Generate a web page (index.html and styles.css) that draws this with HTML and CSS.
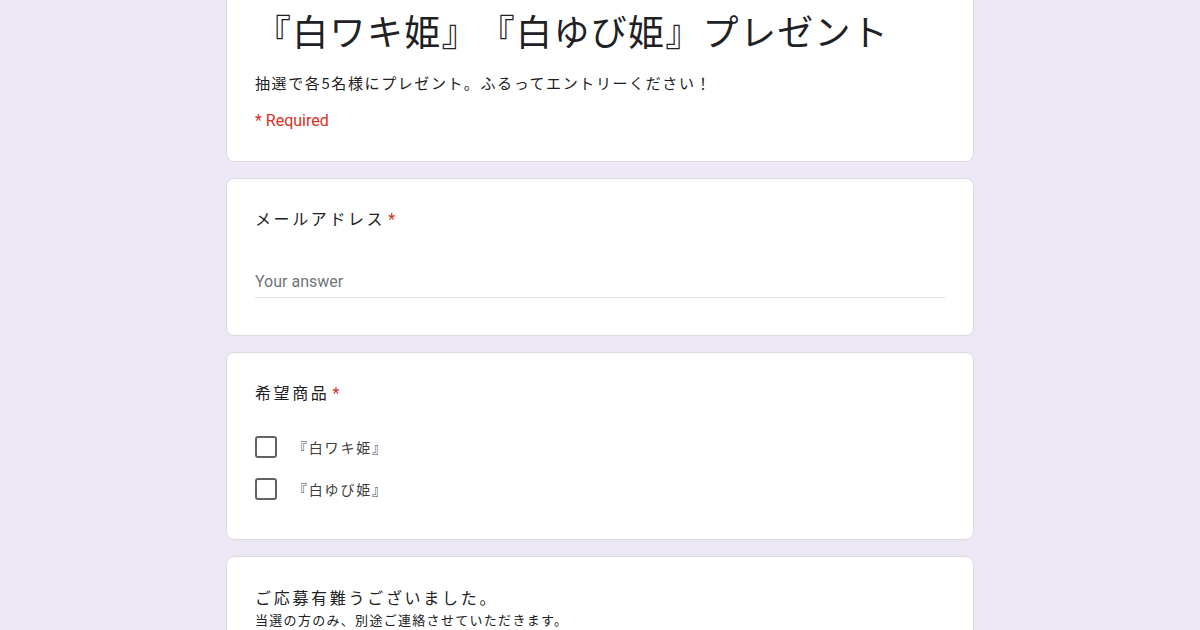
FILE: index.html
```html
<!DOCTYPE html>
<html lang="ja">
<head>
<meta charset="utf-8">
<title>『白ワキ姫』『白ゆび姫』プレゼント</title>
<link rel="stylesheet" href="styles.css">
</head>
<body>
<main class="form">
  <section class="card card-head">
    <h1 class="form-title">『白ワキ姫』『白ゆび姫』プレゼント</h1>
    <p class="form-desc">抽選で各5名様にプレゼント。ふるってエントリーください！</p>
    <p class="required-note">* Required</p>
  </section>

  <section class="card card-email">
    <div class="q-title">メールアドレス<span class="star">*</span></div>
    <div class="answer">Your answer</div>
  </section>

  <section class="card card-choice">
    <div class="q-title">希望商品<span class="star">*</span></div>
    <ul class="options">
      <li class="option"><span class="box"></span><span class="opt-label">『白ワキ姫』</span></li>
      <li class="option"><span class="box"></span><span class="opt-label">『白ゆび姫』</span></li>
    </ul>
  </section>

  <section class="card card-thanks">
    <div class="thanks-title">ご応募有難うございました。</div>
    <div class="thanks-sub">当選の方のみ、別途ご連絡させていただきます。</div>
  </section>
</main>
</body>
</html>
```

FILE: styles.css
```css
html, body {
  margin: 0;
  padding: 0;
}
body {
  background: #ede7f6;
  font-family: Roboto, "Noto Sans CJK JP", sans-serif;
  color: #202124;
  height: 630px;
  overflow: hidden;
  text-spacing-trim: space-all;
}
.form {
  width: 748px;
  margin: -8px auto 0;
  display: flex;
  flex-direction: column;
  gap: 16px;
}
.card {
  background: #fff;
  border: 1px solid #dadce0;
  border-radius: 8px;
  padding: 0 28px;
}
.card-head {
  padding-top: 14px;
  padding-bottom: 30px;
}
.form-title {
  margin: 0;
  font-family: "Noto Sans CJK JP", sans-serif;
  font-weight: 400;
  font-size: 36px;
  line-height: 46px;
  letter-spacing: 1.3px;
  color: #202124;
  white-space: nowrap;
}
.form-desc {
  margin: 20px 0 0;
  font-family: "Noto Sans CJK JP", sans-serif;
  font-size: 15px;
  line-height: 20px;
  letter-spacing: 1.6px;
}
.required-note {
  margin: 18px 0 0;
  font-size: 16px;
  line-height: 20px;
  color: #d93025;
}
.q-title {
  font-family: "Noto Sans CJK JP", sans-serif;
  font-size: 16px;
  line-height: 24px;
  letter-spacing: 2.6px;
}
.star {
  color: #d93025;
  margin-left: 3px;
  font-family: Roboto, sans-serif;
  letter-spacing: 0;
}
.card-email {
  padding-top: 27px;
  padding-bottom: 37px;
}
.answer {
  margin-top: 38px;
  font-size: 16px;
  line-height: 24px;
  color: #70757a;
  padding-bottom: 3px;
  border-bottom: 1px solid #e0e0e0;
}
.card-choice {
  padding-top: 27px;
  padding-bottom: 29px;
}
.options {
  list-style: none;
  margin: 20px 0 0;
  padding: 0;
}
.option {
  display: flex;
  align-items: center;
  height: 42px;
}
.box {
  width: 22px;
  height: 22px;
  box-sizing: border-box;
  border: 2px solid #5f6368;
  border-radius: 3px;
  flex: none;
}
.opt-label {
  margin-left: 16px;
  font-family: "Noto Sans CJK JP", sans-serif;
  font-size: 14px;
  letter-spacing: 1.8px;
  color: #3c4043;
}
.card-thanks {
  padding-top: 29px;
  padding-bottom: 30px;
}
.thanks-title {
  font-family: "Noto Sans CJK JP", sans-serif;
  font-size: 16px;
  line-height: 22px;
  letter-spacing: 2.7px;
}
.thanks-sub {
  font-family: "Noto Sans CJK JP", sans-serif;
  font-size: 13px;
  line-height: 20px;
  letter-spacing: 1.3px;
  margin-top: 2px;
}
```
